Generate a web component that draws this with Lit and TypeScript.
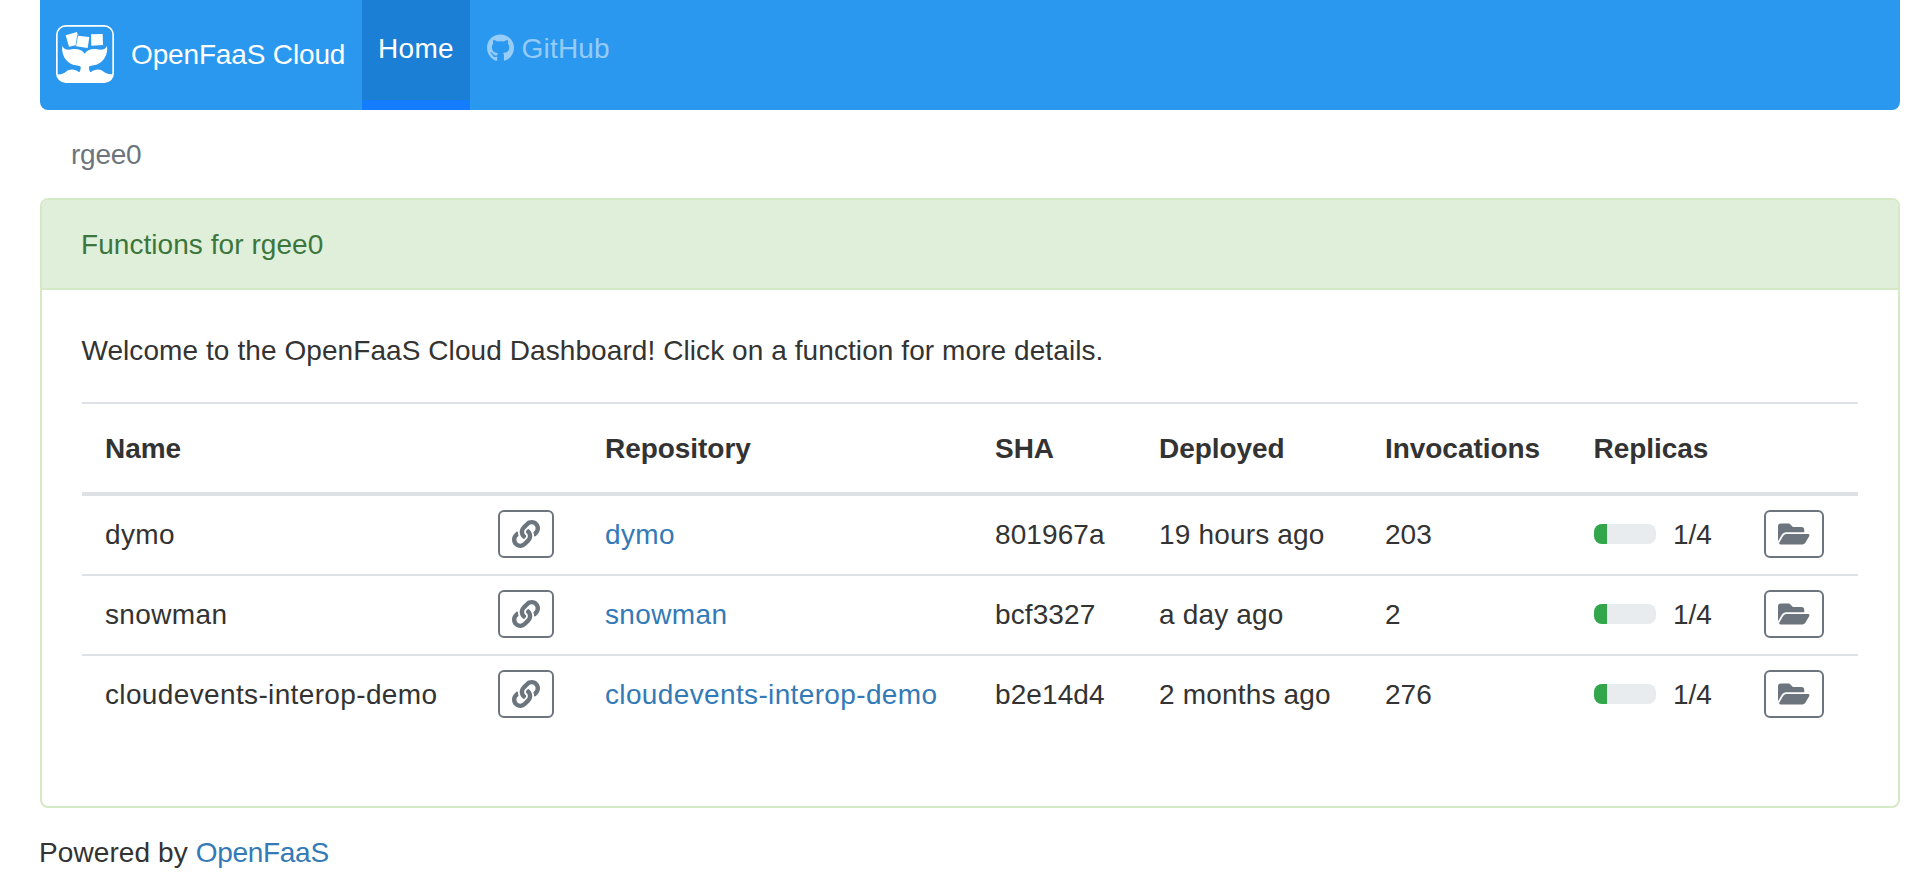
import { LitElement, html, css, svg } from "lit";
import { customElement } from "lit/decorators.js";
import { styleMap } from "lit/directives/style-map.js";

interface FunctionRow {
  name: string;
  sha: string;
  deployed: string;
  invocations: number;
  replicas: number;
  maxReplicas: number;
}

const rows: FunctionRow[] = [
  { name: "dymo", sha: "801967a", deployed: "19 hours ago", invocations: 203, replicas: 1, maxReplicas: 4 },
  { name: "snowman", sha: "bcf3327", deployed: "a day ago", invocations: 2, replicas: 1, maxReplicas: 4 },
  { name: "cloudevents-interop-demo", sha: "b2e14d4", deployed: "2 months ago", invocations: 276, replicas: 1, maxReplicas: 4 },
];

const logo = html`<svg class="logo" viewBox="18 15 174 174" aria-hidden="true">
  ${svg`
    <rect x="20.5" y="17.5" width="169" height="169" rx="27" fill="none" stroke="#fff" stroke-width="5"/>
    <g fill="#fff">
      <path d="M47 46 L81 36 L83 45 L81 48 L77 76 L57 80 Z"/>
      <path d="M84 47 L118 51 L113 84 L78 79 Z"/>
      <path d="M123 43 L158 42 L159 75 L124 77 Z"/>
      <path d="M37 78 C43 90 54 90 66 88 C84 85 98 92 104 101 C110 92 124 85 142 88 C154 90 165 90 171 78 C175 104 160 127 139 134 C128 137 117 136 117 141 C117 149 118 154 122 157 C135 147 150 146 161 155 C169 161 178 163 188 163 L188 168 Q186 187 164 187 L46 187 Q23 187 22 163 C32 164 40 161 48 155 C58 147 75 146 87 157 C91 154 92 149 92 141 C92 136 80 137 69 134 C48 127 33 104 37 78 Z"/>
    </g>`}
</svg>`;

const githubIcon = html`<svg class="github" viewBox="0 0 496 512" aria-hidden="true"><path fill="currentColor" d="M165.9 397.4c0 2-2.3 3.6-5.2 3.6-3.3.3-5.6-1.3-5.6-3.6 0-2 2.3-3.6 5.2-3.6 3-.3 5.6 1.3 5.6 3.6zm-31.1-4.5c-.7 2 1.3 4.3 4.3 4.9 2.6 1 5.6 0 6.2-2s-1.3-4.3-4.3-5.2c-2.6-.7-5.5.3-6.2 2.3zm44.2-1.7c-2.9.7-4.9 2.6-4.6 4.9.3 2 2.9 3.3 5.9 2.6 2.9-.7 4.9-2.6 4.6-4.6-.3-1.9-3-3.2-5.9-2.9zM244.8 8C106.1 8 0 113.3 0 252c0 110.9 69.8 205.8 169.5 239.2 12.8 2.3 17.3-5.6 17.3-12.1 0-6.2-.3-40.4-.3-61.4 0 0-70 15-84.7-29.8 0 0-11.4-29.1-27.8-36.6 0 0-22.9-15.7 1.6-15.4 0 0 24.9 2 38.6 25.8 21.9 38.6 58.6 27.5 72.9 20.9 2.3-16 8.8-27.1 16-33.7-55.9-6.2-112.3-14.3-112.3-110.5 0-27.5 7.6-41.3 23.6-58.9-2.6-6.5-11.1-33.3 2.6-67.9 20.9-6.5 69 27 69 27 20-5.6 41.5-8.5 62.8-8.5s42.8 2.9 62.8 8.5c0 0 48.1-33.6 69-27 13.7 34.7 5.2 61.4 2.6 67.9 16 17.7 25.8 31.5 25.8 58.9 0 96.5-58.9 104.2-114.8 110.5 9.2 7.9 17 22.9 17 46.4 0 33.7-.3 75.4-.3 83.6 0 6.5 4.6 14.4 17.3 12.1C428.2 457.8 496 362.9 496 252 496 113.3 383.5 8 244.8 8zM97.2 352.9c-1.3 1-1 3.3.7 5.2 1.6 1.6 3.9 2.3 5.2 1 1.3-1 1-3.3-.7-5.2-1.6-1.6-3.9-2.3-5.2-1zm-10.8-8.1c-.7 1.3.3 2.9 2.3 3.9 1.6 1 3.6.7 4.3-.7.7-1.3-.3-2.9-2.3-3.9-2-.6-3.6-.3-4.3.7zm32.4 35.6c-1.6 1.3-1 4.3 1.3 6.2 2.3 2.3 5.2 2.6 6.5 1 1.3-1.3.7-4.3-1.3-6.2-2.2-2.3-5.2-2.6-6.5-1zm-11.4-14.7c-1.6 1-1.6 3.6 0 5.9 1.6 2.3 4.3 3.3 5.6 2.3 1.6-1.3 1.6-3.9 0-6.2-1.4-2.3-4-3.3-5.6-2z"/></svg>`;

const linkIcon = html`<svg class="icon-link" viewBox="0 0 512 512" aria-hidden="true"><path fill="currentColor" d="M326.612 185.391c59.747 59.809 58.927 155.698.36 214.59-.11.12-.24.25-.36.37l-67.2 67.2c-59.27 59.27-155.699 59.262-214.96 0-59.27-59.26-59.27-155.7 0-214.96l37.106-37.106c9.84-9.84 26.786-3.3 27.294 10.606.648 17.722 3.826 35.527 9.69 52.721 1.986 5.822.567 12.262-3.783 16.612l-13.087 13.087c-28.026 28.026-28.905 73.66-1.155 101.96 28.024 28.579 74.086 28.749 102.325.51l67.2-67.19c28.191-28.191 28.073-73.757 0-101.83-3.701-3.694-7.429-6.564-10.341-8.569a16.037 16.037 0 0 1-6.947-12.606c-.396-10.567 3.348-21.456 11.698-29.806l21.054-21.055c5.521-5.521 14.182-6.199 20.584-1.731a152.482 152.482 0 0 1 20.522 17.197zM467.547 44.449c-59.261-59.262-155.69-59.27-214.96 0l-67.2 67.2c-.12.12-.25.25-.36.37-58.566 58.892-59.387 154.781.36 214.59a152.454 152.454 0 0 0 20.521 17.196c6.402 4.468 15.064 3.789 20.584-1.731l21.054-21.055c8.35-8.35 12.094-19.239 11.698-29.806a16.037 16.037 0 0 0-6.947-12.606c-2.912-2.005-6.64-4.875-10.341-8.569-28.073-28.073-28.191-73.639 0-101.83l67.2-67.19c28.239-28.239 74.3-28.069 102.325.51 27.75 28.3 26.872 73.934-1.155 101.96l-13.087 13.087c-4.35 4.35-5.769 10.79-3.783 16.612 5.864 17.194 9.042 34.999 9.69 52.721.509 13.906 17.454 20.446 27.294 10.606l37.106-37.106c59.271-59.259 59.271-155.699.001-214.959z"/></svg>`;

const folderIcon = html`<svg class="icon-folder" viewBox="0 0 576 512" aria-hidden="true"><path fill="currentColor" d="M572.694 292.093L500.27 416.248A63.997 63.997 0 0 1 444.989 448H45.025c-18.523 0-30.064-20.093-20.731-36.093l72.424-124.155A64 64 0 0 1 152 256h399.964c18.523 0 30.064 20.093 20.73 36.093zM152 224h328v-48c0-26.51-21.49-48-48-48H272l-64-64H48C21.49 64 0 85.49 0 112v278.046l69.077-118.418C86.214 242.25 117.989 224 152 224z"/></svg>`;

@customElement("app-root")
export class AppRoot extends LitElement {
  static styles = css`
    :host {
      display: block;
      box-sizing: border-box;
      height: 892px;
      padding: 0 30px 0 40px;
      overflow: hidden;
      background: #fff;
      color: #333;
      font: 28px/40px "Liberation Sans", Arial, sans-serif;
      white-space: nowrap;
    }
    *, *::before, *::after { box-sizing: border-box; }
    a { color: #337ab7; text-decoration: none; }
    svg { display: block; flex: none; }

    .navbar {
      display: flex;
      height: 110px;
      padding-left: 16px;
      background: #2b98f0;
      border-radius: 0 0 8px 8px;
    }
    .navbar a { color: #fff; }
    .brand {
      display: flex;
      align-items: center;
      gap: 17px;
      width: 306px;
      height: 108px;
      letter-spacing: -0.15px;
    }
    .brand .text { padding-top: 2px; }
    .logo { width: 58px; height: 58px; }
    .navbar .tab {
      display: flex;
      width: 108px;
      padding: 29px 0 0 16px;
      background: #1b7fd5;
      border-bottom: 10px solid #147dff;
      letter-spacing: 0.3px;
    }
    .navbar .github-tab {
      display: flex;
      gap: 8px;
      padding: 29px 0 0 16.5px;
      color: rgba(255, 255, 255, 0.5);
      letter-spacing: 0.2px;
    }
    .github { width: 27px; height: 28px; margin-top: 5px; }

    .crumbs {
      height: 88px;
      padding: 25px 0 0 31px;
      color: #6c757d;
      letter-spacing: -0.25px;
    }

    .card {
      height: 610px;
      border: 2px solid #d6e9c6;
      border-radius: 8px;
      overflow: hidden;
    }
    .card-header {
      height: 90px;
      padding: 25px 39px;
      background: #dfefda;
      border-bottom: 2px solid #d6e9c6;
      color: #3c763d;
      letter-spacing: 0.06px;
    }
    .card-body { padding: 41px 40px 0; }
    .welcome { height: 71px; margin-left: -0.6px; letter-spacing: 0.08px; }

    .row {
      display: grid;
      grid-template-columns: 393px 107px 390px 164px 226px 208.5px 170.5px 1fr;
      align-items: center;
      height: 80px;
      padding: 0 0 2px 23px;
      border-top: 2px solid #dee2e6;
    }
    .row .text { padding-top: 2px; }
    .head {
      height: 94px;
      padding-bottom: 0;
      border-bottom: 4px solid #dee2e6;
      font-weight: 700;
      letter-spacing: -0.05px;
    }
    .first { height: 78px; border-top: 0; }
    .repo { grid-column: 3; }
    .name { letter-spacing: 0.36px; }
    .sha { letter-spacing: 0.1px; }
    .deployed { letter-spacing: 0.18px; }

    .button {
      display: flex;
      align-items: center;
      justify-content: center;
      height: 48px;
      border: 2px solid #6c757d;
      border-radius: 6px;
      color: #6c757d;
    }
    .button-link { width: 56px; }
    .button-folder { width: 60px; }
    .icon-link { width: 28px; height: 28px; }
    .icon-folder { width: 31.5px; height: 28px; }

    .replicas { display: flex; align-items: center; gap: 17.5px; }
    .progress {
      width: 62px;
      height: 20px;
      border-radius: 8px;
      background: #e9ecef;
      overflow: hidden;
    }
    .bar { height: 100%; background: #31a64b; }

    .footer { padding-top: 25px; margin-left: -1px; letter-spacing: 0.1px; }
    .footer a { letter-spacing: -0.3px; }
  `;

  private renderRow(row: FunctionRow, index: number) {
    const filled = { width: `${(row.replicas / row.maxReplicas) * 90}%` };
    return html`<div class="row ${index === 0 ? "first" : ""}">
      <span class="text name">${row.name}</span>
      <a class="button button-link">${linkIcon}</a>
      <a class="text name">${row.name}</a>
      <span class="text sha">${row.sha}</span>
      <span class="text deployed">${row.deployed}</span>
      <span class="text">${row.invocations}</span>
      <span class="replicas">
        <span class="progress"><div class="bar" style=${styleMap(filled)}></div></span>
        <span class="text">${row.replicas}/${row.maxReplicas}</span>
      </span>
      <a class="button button-folder">${folderIcon}</a>
    </div>`;
  }

  render() {
    return html`
      <nav class="navbar">
        <a class="brand">${logo}<span class="text">OpenFaaS Cloud</span></a>
        <a class="tab">Home</a>
        <a class="github-tab">${githubIcon}<span>GitHub</span></a>
      </nav>
      <div class="crumbs">rgee0</div>
      <section class="card">
        <header class="card-header">Functions for rgee0</header>
        <div class="card-body">
          <div class="welcome">Welcome to the OpenFaaS Cloud Dashboard! Click on a function for more details.</div>
          <div class="row head">
            <span class="text">Name</span>
            <span class="text repo">Repository</span>
            <span class="text">SHA</span>
            <span class="text">Deployed</span>
            <span class="text">Invocations</span>
            <span class="text">Replicas</span>
          </div>
          ${rows.map((row, index) => this.renderRow(row, index))}
        </div>
      </section>
      <footer class="footer">Powered by <a>OpenFaaS</a></footer>
    `;
  }
}
